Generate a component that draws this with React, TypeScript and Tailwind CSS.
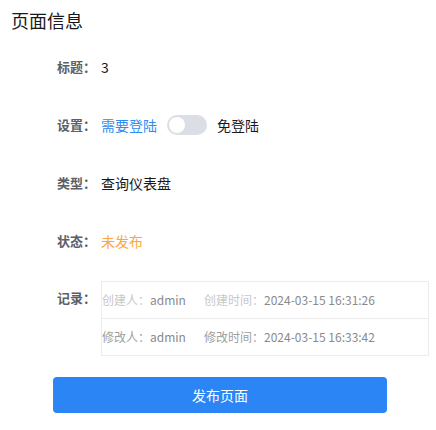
import React from "react";

const font = { fontFamily: '"Noto Sans CJK SC", "Noto Sans", sans-serif' };

function Row({ label, children }: { label: string; children: React.ReactNode }) {
  return (
    <div className="flex items-start mb-6">
      <div className="w-[44px] h-[34px] flex items-center text-[13px] font-bold text-[#5c5f66]">{label}</div>
      <div className="min-h-[34px] flex items-center text-[14px] flex-1">{children}</div>
    </div>
  );
}

export default function App() {
  return (
    <div className="w-[436px] h-[430px] bg-white" style={font}>
      <div className="pl-[11px] pt-[8px] h-[50px] text-[18px] leading-[24px] text-[#17181a]">页面信息</div>
      <div className="pl-[57px] pr-[7px]">
        <Row label="标题：">
          <span className="text-[#17181a]">3</span>
        </Row>
        <Row label="设置：">
          <span className="text-[#2d8cf0]">需要登陆</span>
          <button className="ml-[10px] w-[40px] h-[20px] rounded-full bg-[#dcdee6] relative">
            <span className="absolute left-[2px] top-[2px] w-[16px] h-[16px] rounded-full bg-white" />
          </button>
          <span className="ml-[10px] text-[#17181a]">免登陆</span>
        </Row>
        <Row label="类型：">
          <span className="text-[#17181a]">查询仪表盘</span>
        </Row>
        <Row label="状态：">
          <span className="text-[#ffa43e]">未发布</span>
        </Row>
        <div className="flex items-start -mt-px">
          <div className="w-[44px] h-[34px] flex items-center text-[13px] font-bold text-[#5c5f66]">记录：</div>
          <div className="flex-1 border border-[#ececec] text-[12px]">
            <div className="flex h-[37px] items-center border-b border-[#ececec]">
              <div className="w-[102px]">
                <span className="text-[#c8c8c8]">创建人：</span>
                <span className="text-[#8a8a8a]">admin</span>
              </div>
              <div>
                <span className="text-[#c8c8c8]">创建时间：</span>
                <span className="text-[#8a8a8a]">2024-03-15 16:31:26</span>
              </div>
            </div>
            <div className="flex h-[36px] items-center">
              <div className="w-[102px]">
                <span className="text-[#a0a0a0]">修改人：</span>
                <span className="text-[#8a8a8a]">admin</span>
              </div>
              <div>
                <span className="text-[#a0a0a0]">修改时间：</span>
                <span className="text-[#8a8a8a]">2024-03-15 16:33:42</span>
              </div>
            </div>
          </div>
        </div>
      </div>
      <div className="pl-[53px] pt-[21px]">
        <button className="w-[334px] h-[36px] rounded-[4px] bg-[#2b85f5] text-white text-[14px]">发布页面</button>
      </div>
    </div>
  );
}
